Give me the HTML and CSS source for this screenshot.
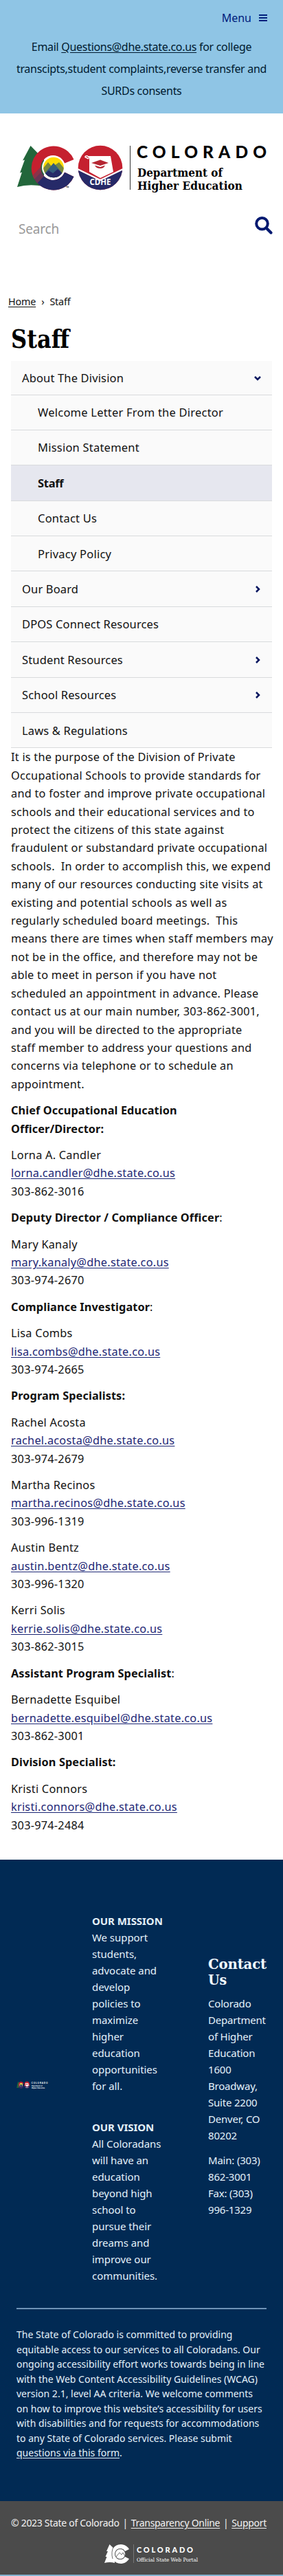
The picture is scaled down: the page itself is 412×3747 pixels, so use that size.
FILE: index.html
```html
<!DOCTYPE html>
<html lang="en">
<head>
<meta charset="utf-8">
<title>Staff</title>
<link rel="stylesheet" href="styles.css">
</head>
<body>
<header class="topbar">
  <a class="menu">Menu
    <svg class="bars" width="12" height="12" viewBox="0 0 12 12"><path d="M0 2h12M0 6h12M0 10h12" stroke="currentColor" stroke-width="2"/></svg>
  </a>
  <p class="notice">Email <a href="#">Questions@dhe.state.co.us</a> for college<br><span class="wide">transcipts,student complaints,reverse transfer and</span><br>SURDs consents</p>
</header>

<div class="brand">
  <svg width="376" height="76" viewBox="24 208 376 76">
    <defs>
      <clipPath id="disc"><circle cx="146" cy="244" r="32.3"/></clipPath>
      <clipPath id="sun"><circle cx="78" cy="243.500" r="14.800"/></clipPath>
      <clipPath id="cee"><path d="M107.500 232A32.200 32 0 1 0 107.500 257L94 250.500A18 18 0 1 1 94 237.500Z"/></clipPath>
      <g id="co-mark">
        <path d="M44.500 212L33 233.500L36 232.500L29 251.500L32 250.500L25 272Q42 267 64 271L64 232Z" fill="#22663b"/>
        <g clip-path="url(#cee)">
          <rect x="44" y="210" width="66" height="68" fill="#c5202f"/>
          <path d="M44 267L62 248L78 252L110 250V280H44Z" fill="#262a68"/>
          <path d="M45 258L59 243L68 252L52 269Z" fill="#7a3850" opacity=".8"/>
        </g>
        <circle cx="78" cy="243.500" r="17" fill="#fff"/>
        <g clip-path="url(#sun)">
          <rect x="60" y="226" width="36" height="36" fill="#ffdb00"/>
          <path d="M60 248L70 236L76 243L86 236L96 248V262H60Z" fill="#77883e"/>
          <path d="M62 256L78 237L95 257V262H60Z" fill="#345c7c"/>
          <path d="M60 258L71 248L77 252L84 246L96 257V262H60Z" fill="#262a68"/>
        </g>
      </g>
      <g id="cdhe-mark">
        <g clip-path="url(#disc)">
          <rect x="113" y="211" width="66" height="66" fill="#c5202f"/>
          <path d="M113 247L146 263L179 247V278H113Z" fill="#262a68"/>
          <path d="M113 246L146 262L179 246" fill="none" stroke="#fff" stroke-width="2.200"/>
        </g>
        <path d="M127 227H161L165 250L146 259L130 250V231Z" fill="#fff"/>
        <path d="M129 231L124 228.500Q124 226 128 227" fill="none" stroke="#fff" stroke-width="1.500"/>
        <path d="M133 237L146 232.500L158 237L146 241ZM138 240.500L146 243L153 240.500Q151 245 146 245Q140 245 138 240.500Z" fill="#b52632"/>
        <text x="130.500" y="269" class="logo-cdhe" textLength="31">CDHE</text>
      </g>
    </defs>
    <use href="#co-mark"/><use href="#cdhe-mark"/>
    <text x="96" y="275" class="logo-tm">™</text>
    <path d="M189.500 212V276" stroke="#333"/>
    <text x="199" y="229.500" class="logo-state" textLength="189">COLORADO</text>
    <text x="200" y="256.500" class="logo-dept" textLength="124" lengthAdjust="spacingAndGlyphs">Department of</text>
    <text x="200" y="275.500" class="logo-dept" textLength="153" lengthAdjust="spacingAndGlyphs">Higher Education</text>
  </svg>
</div>

<form class="search">
  <span class="placeholder">Search</span>
  <svg width="26" height="26" viewBox="0 0 26 26"><circle cx="10.500" cy="10.300" r="8.300" fill="none" stroke="#001970" stroke-width="4"/><path d="M17 17L23.500 23.500" stroke="#001970" stroke-width="4.300" stroke-linecap="round"/></svg>
</form>

<nav class="crumbs"><a href="#">Home</a><span class="sep">›</span><span>Staff</span></nav>

<main>
  <h1><svg width="90" height="44" viewBox="0 0 90 44"><text x="0" y="34" textLength="85" lengthAdjust="spacingAndGlyphs">Staff</text></svg></h1>
  <ul class="side">
    <li>About The Division<svg class="chev" width="12" height="12" viewBox="0 0 12 12"><path d="M2 4L6 8L10 4"/></svg></li>
    <li class="sub">Welcome Letter From the Director</li>
    <li class="sub">Mission Statement</li>
    <li class="sub active">Staff</li>
    <li class="sub">Contact Us</li>
    <li class="sub">Privacy Policy</li>
    <li>Our Board<svg class="chev" width="12" height="12" viewBox="0 0 12 12"><path d="M4 2L8 6L4 10"/></svg></li>
    <li>DPOS Connect Resources</li>
    <li>Student Resources<svg class="chev" width="12" height="12" viewBox="0 0 12 12"><path d="M4 2L8 6L4 10"/></svg></li>
    <li>School Resources<svg class="chev" width="12" height="12" viewBox="0 0 12 12"><path d="M4 2L8 6L4 10"/></svg></li>
    <li>Laws &amp; Regulations</li>
  </ul>
  <div class="content">
    <p>It is the purpose of the Division of Private<br>Occupational Schools to provide standards for<br>and to foster and improve private occupational<br>schools and their educational services and to<br>protect the citizens of this state against<br>fraudulent or substandard private occupational<br>schools.&nbsp; In order to accomplish this, we expend<br>many of our resources conducting site visits at<br>existing and potential schools as well as<br>regularly scheduled board meetings.&nbsp; This<br>means there are times when staff members may<br>not be in the office, and therefore may not be<br>able to meet in person if you have not<br>scheduled an appointment in advance. Please<br>contact us at our main number, 303-862-3001,<br>and you will be directed to the appropriate<br>staff member to address your questions and<br>concerns via telephone or to schedule an<br>appointment.</p>
    <p><b>Chief Occupational Education<br>Officer/Director:</b></p>
    <p>Lorna A. Candler<br><a href="#">lorna.candler@dhe.state.co.us</a><br>303-862-3016</p>
    <p><b>Deputy Director / Compliance Officer</b>:</p>
    <p>Mary Kanaly<br><a href="#">mary.kanaly@dhe.state.co.us</a><br>303-974-2670</p>
    <p><b>Compliance Investigator</b>:</p>
    <p>Lisa Combs<br><a href="#">lisa.combs@dhe.state.co.us</a><br>303-974-2665</p>
    <p><b>Program Specialists:</b></p>
    <p>Rachel Acosta<br><a href="#">rachel.acosta@dhe.state.co.us</a><br>303-974-2679</p>
    <p>Martha Recinos<br><a href="#">martha.recinos@dhe.state.co.us</a><br>303-996-1319</p>
    <p>Austin Bentz<br><a href="#">austin.bentz@dhe.state.co.us</a><br>303-996-1320</p>
    <p>Kerri Solis<br><a href="#">kerrie.solis@dhe.state.co.us</a><br>303-862-3015</p>
    <p><b>Assistant Program Specialist</b>:</p>
    <p>Bernadette Esquibel<br><a href="#">bernadette.esquibel@dhe.state.co.us</a><br>303-862-3001</p>
    <p><b>Division Specialist:</b></p>
    <p>Kristi Connors<br><a href="#">kristi.connors@dhe.state.co.us</a><br>303-974-2484</p>
  </div>
</main>

<footer class="footer">
  <div class="columns">
    <svg class="mini" width="47" height="12" viewBox="24 208 376 76" preserveAspectRatio="none">
      <use href="#co-mark"/><use href="#cdhe-mark"/>
      <text x="199" y="231" class="logo-state light" textLength="189">COLORADO</text>
      <text x="200" y="256" class="logo-dept light" textLength="124" lengthAdjust="spacingAndGlyphs">Department of</text>
      <text x="200" y="276" class="logo-dept light" textLength="153" lengthAdjust="spacingAndGlyphs">Higher Education</text>
    </svg>
    <div class="about">
      <p><b>OUR MISSION</b><br>We support<br>students,<br>advocate and<br>develop<br>policies to<br>maximize<br>higher<br>education<br>opportunities<br>for all.</p>
      <p><b>OUR VISION</b><br>All Coloradans<br>will have an<br>education<br>beyond high<br>school to<br>pursue their<br>dreams and<br>improve our<br>communities.</p>
    </div>
    <div class="contact">
      <h2><svg width="90" height="50" viewBox="0 0 90 50"><text x="0" y="20" textLength="85" lengthAdjust="spacingAndGlyphs">Contact</text><text x="0" y="42.500" textLength="27" lengthAdjust="spacingAndGlyphs">Us</text></svg></h2>
      <p>Colorado<br>Department<br>of Higher<br>Education<br>1600<br>Broadway,<br>Suite 2200<br>Denver, CO<br>80202</p>
      <p>Main: (303)<br>862-3001<br>Fax: (303)<br>996-1329</p>
    </div>
  </div>
  <p class="access">The State of Colorado is committed to providing<br>equitable access to our services to all Coloradans. Our<br>ongoing accessibility effort works towards being in line<br>with the Web Content Accessibility Guidelines (WCAG)<br>version 2.1, level AA criteria. We welcome comments<br>on how to improve this website’s accessibility for users<br>with disabilities and for requests for accommodations<br>to any State of Colorado services. Please submit<br><a href="#">questions via this form</a>.</p>
</footer>

<div class="legal">
  <div class="links"><span>© 2023 State of Colorado</span><span>|</span><a href="#">Transparency Online</a><span>|</span><a href="#">Support</a></div>
  <svg class="portal" width="150" height="34" viewBox="0 0 150 34">
    <path d="M7.500 1L3 11H5L1.500 19H3.500L0 28Q8 26 15 28V8Z" fill="#fff"/>
    <path d="M36 8A14 14 0 1 0 36 22L30 19A8 8 0 1 1 30 11Z" fill="#fff"/>
    <circle cx="23" cy="15" r="7.500" fill="#fff" stroke="#4b4b4b" stroke-width=".8"/>
    <path d="M17 19L22 13L25 16L27 13L30 18M14 3Q9 12 12 22" fill="none" stroke="#4b4b4b" stroke-width=".8"/>
    <path d="M42.500 1V28" stroke="#777"/>
    <text x="47" y="12.500" class="portal-state" textLength="82">COLORADO</text>
    <text x="47" y="25.500" class="portal-sub" textLength="89" lengthAdjust="spacingAndGlyphs">Official State Web Portal</text>
  </svg>
</div>
</body>
</html>
```
FILE: styles.css
```css
* { box-sizing: border-box; }
body { margin: 0; background: #fff; color: #111; font: 16px/26.4px "Noto Sans", "Open Sans", sans-serif; white-space: nowrap; overflow-x: hidden; }
p, h1, h2, ul { margin: 0; padding: 0; }
a { text-underline-offset: 2px; }
svg { overflow: visible; }

.topbar { height: 165px; background: #8fc5e5; padding: 14px 0 0; }
.menu { display: flex; justify-content: flex-end; align-items: center; gap: 11px; height: 24px; padding-right: 23px; font-size: 16px; color: #00207c; }
.notice { margin-top: 14px; text-align: center; line-height: 32px; letter-spacing: -.3px; color: #001a30; }
.notice a { color: inherit; }

.brand { height: 115px; padding: 43px 0 0 24px; }
.brand svg { display: block; }
.logo-cdhe { font: bold 11.500px "Noto Sans", sans-serif; fill: #fff; }
.logo-tm { font: 6px "Noto Sans", sans-serif; }
.logo-state { font: 900 24.500px/1.3 Lato, sans-serif; fill: #000; }
.logo-dept { font: bold 17px "DejaVu Serif", serif; fill: #000; }
.light { fill: #fff; }

.search { display: flex; justify-content: space-between; height: 100px; padding: 35px 15px 0 27px; }
.placeholder { font-size: 19px; line-height: 36px; letter-spacing: -.2px; color: #999; }

.crumbs { display: flex; gap: 8px; height: 85px; padding: 46px 0 0 12px; font-size: 14.400px; letter-spacing: -.2px; }
.crumbs a { color: inherit; }

main { height: 2240px; padding: 7px 16px 0; }
h1 { height: 53px; }
h1 svg { display: block; }
h1 text { font: bold 36.500px "DejaVu Serif", serif; fill: #000; }
.side { list-style: none; }
.side li { display: flex; justify-content: space-between; align-items: center; height: 51.400px; padding: 1px 15px 0 16px; background: #fafafa; border-bottom: 1px solid #d8dadc; font-size: 16.500px; letter-spacing: .15px; }
.side li:first-child { height: 49.500px; }
.side .sub { padding-left: 39px; letter-spacing: .22px; }
.side .active { background: #e6e7ef; font-weight: bold; letter-spacing: -.3px; }
.chev path { fill: none; stroke: #00145f; stroke-width: 2.500; }
.content { font-size: 16.300px; letter-spacing: .25px; }
.content p { margin-bottom: 12px; }
.content b { letter-spacing: .1px; }
.content a { color: #1c2674; }

.footer { height: 933px; background: #012a54; color: #e4f1fa; font-size: 15px; }
.columns { display: grid; grid-template-columns: 110px 169px 85px; align-items: center; height: 654px; margin: 0 24px; border-bottom: 2px solid #6f93b7; line-height: 24px; letter-spacing: -.05px; }
.mini { margin-top: 4px; }
.about { padding-top: 41px; }
.about p + p { margin-top: 36px; }
.contact { padding-top: 8px; letter-spacing: -.2px; }
.contact p + p { margin-top: 12px; }
h2 { height: 58px; }
h2 svg { display: block; }
h2 text { font: bold 20px "DejaVu Serif", serif; fill: #f2f9ff; }
.access { padding: 26px 24px 0; line-height: 21.500px; font-size: 14px; }
.access a { color: inherit; }

.legal { height: 109px; background: #4b4b4b; color: #f2f2f2; border-bottom: 2px solid #83b3d0; font-size: 14px; padding-top: 22px; }
.links { display: flex; justify-content: space-between; margin: 0 24px 0 16px; height: 40px; line-height: 20px; letter-spacing: -.3px; }
.links a { color: inherit; }
.portal { display: block; margin-left: 152px; }
.portal-state { font: 900 11px Lato, sans-serif; fill: #fff; }
.portal-sub { font: 7.500px "DejaVu Serif", serif; fill: #fff; }
```
